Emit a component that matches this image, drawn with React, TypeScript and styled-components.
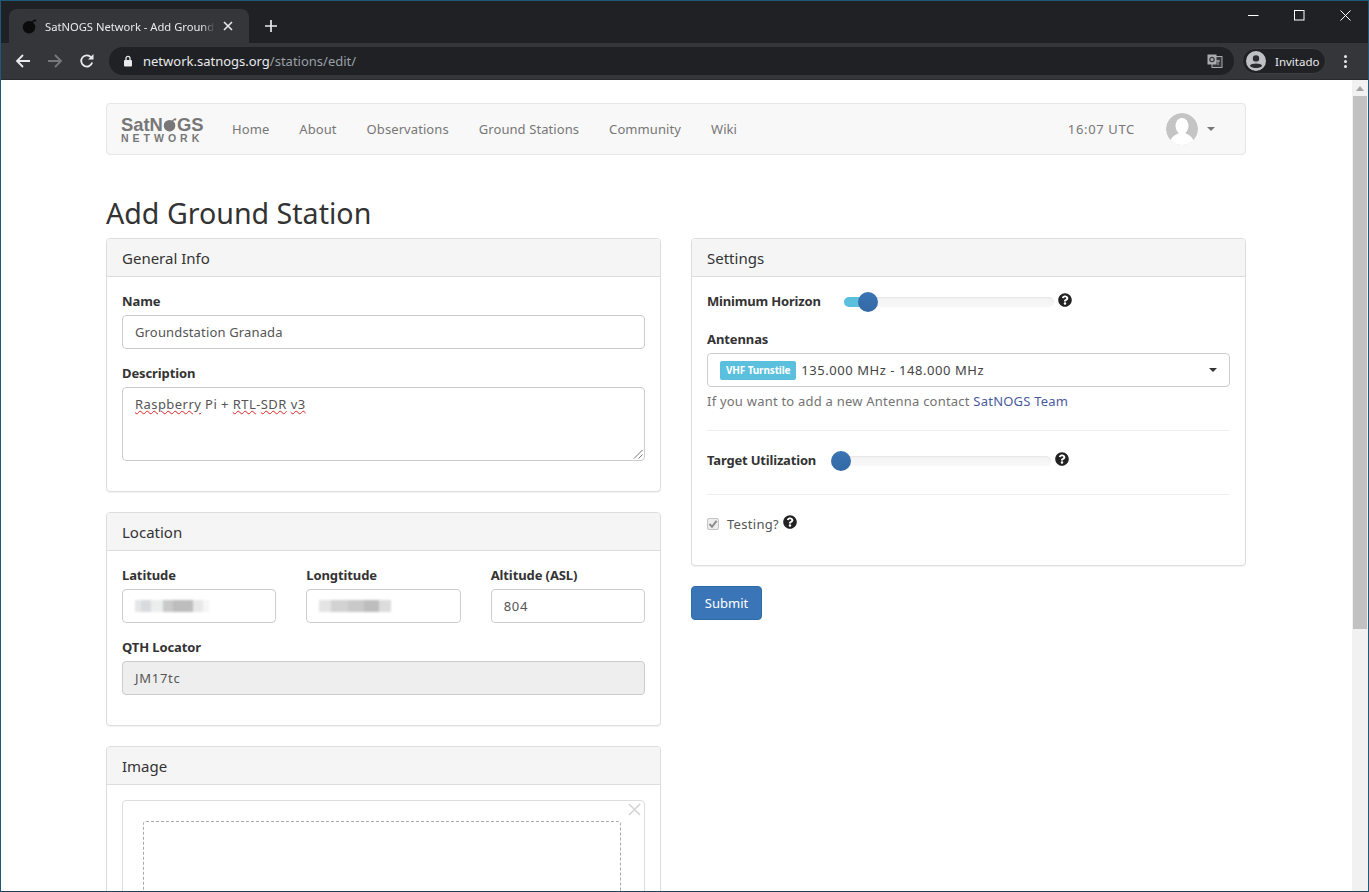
import React from "react";
import styled, { createGlobalStyle } from "styled-components";
import { FaQuestionCircle } from "react-icons/fa";

const GlobalStyle = createGlobalStyle`
  html, body {
    margin: 0;
    height: 100%;
    overflow: hidden;
    background: #fff;
  }
  * { box-sizing: border-box; }
`;

const Planet = ({ size, color }: { size: number; color: string }) => (
  <PlanetSvg width={size} height={size} viewBox="0 0 16 16">
    <circle cx="7.5" cy="8.8" r="6.6" fill={color} />
    <path d="M9 4.5 L13.6 1.2" stroke={color} strokeWidth="1.4" />
    <circle cx="14" cy="1.6" r="1.2" fill={color} />
  </PlanetSvg>
);

const HelpIcon = () => (
  <HelpWrap>
    <FaQuestionCircle size={14} />
  </HelpWrap>
);

const LEFT_MASK = "#e6e6e6 0 8%, #d8dadc 8% 22%, #eceeee 22% 38%, #c9c9c9 38% 52%, #bdbdbd 52% 78%, #e8e8e8 78% 92%, #f6f6f6 92%";
const RIGHT_MASK = "#e4e4e4 0 16%, #d2d2d2 16% 40%, #c9c9c9 40% 62%, #bdbdbd 62% 84%, #dcdcdc 84% 100%";

export default function App() {
  return (
    <Window>
      <GlobalStyle />
      <TabStrip>
        <Tab>
          <Planet size={15} color="#0b0b0b" />
          <TabTitle>SatNOGS Network - Add Ground Station</TabTitle>
          <svg width="10" height="10" viewBox="0 0 10 10">
            <path d="M1 1 L9 9 M9 1 L1 9" stroke="#e8eaed" strokeWidth="1.6" />
          </svg>
        </Tab>
        <NewTab>
          <svg width="12" height="12" viewBox="0 0 12 12">
            <path d="M6 0 V12 M0 6 H12" stroke="#e8eaed" strokeWidth="1.7" />
          </svg>
        </NewTab>
        <WindowControls>
          <svg width="11" height="11" viewBox="0 0 11 11">
            <path d="M0 5.5 H10.5" stroke="#fff" strokeWidth="1" />
          </svg>
          <svg width="11" height="11" viewBox="0 0 11 11">
            <rect x="0.5" y="0.5" width="9.5" height="9.5" fill="none" stroke="#fff" strokeWidth="1" />
          </svg>
          <svg width="11" height="11" viewBox="0 0 11 11">
            <path d="M0.5 0.5 L10.5 10.5 M10.5 0.5 L0.5 10.5" stroke="#fff" strokeWidth="1" />
          </svg>
        </WindowControls>
      </TabStrip>
      <Toolbar>
        <ToolButtons>
          <svg width="16" height="16" viewBox="0 0 16 16">
            <path d="M15 8 H2 M8 2 L2 8 L8 14" fill="none" stroke="#e8eaed" strokeWidth="1.8" />
          </svg>
          <svg width="16" height="16" viewBox="0 0 16 16">
            <path d="M1 8 H14 M8 2 L14 8 L8 14" fill="none" stroke="#77787b" strokeWidth="1.8" />
          </svg>
          <svg width="16" height="16" viewBox="0 0 16 16">
            <path d="M13.2 9.5 A5.6 5.6 0 1 1 12 4.2" fill="none" stroke="#e8eaed" strokeWidth="1.8" />
            <path d="M14.5 1 V6.6 H9 Z" fill="#e8eaed" />
          </svg>
        </ToolButtons>
        <Omnibox>
          <svg width="10" height="12" viewBox="0 0 10 12">
            <rect x="1" y="5" width="8" height="6.5" rx="1" fill="#e8eaed" />
            <path d="M3 5 V3.4 A2 2 0 0 1 7 3.4 V5" fill="none" stroke="#e8eaed" strokeWidth="1.3" />
          </svg>
          <UrlText>
            network.satnogs.org<UrlPath>/stations/edit/</UrlPath>
          </UrlText>
          <svg width="16" height="14" viewBox="0 0 16 14">
            <rect x="5" y="2.5" width="10" height="11" fill="#35363a" stroke="#a9abad" />
            <rect x="0.5" y="0.5" width="9" height="10" fill="#a9abad" />
            <circle cx="5" cy="5.5" r="2.2" fill="none" stroke="#35363a" strokeWidth="1.2" />
            <path d="M9 7 H13 M11 6 V11" stroke="#a9abad" strokeWidth="1" />
          </svg>
        </Omnibox>
        <ProfileChip>
          <svg width="20" height="20" viewBox="0 0 20 20">
            <circle cx="10" cy="10" r="10" fill="#bdc1c6" />
            <circle cx="10" cy="7.4" r="3.2" fill="#2b2c2f" />
            <path d="M3.8 15 C5 11.8 15 11.8 16.2 15 C14.6 16.6 12.4 17 10 17 C7.6 17 5.4 16.6 3.8 15 Z" fill="#2b2c2f" />
          </svg>
          <span>Invitado</span>
        </ProfileChip>
        <MenuDots>
          <i />
          <i />
          <i />
        </MenuDots>
      </Toolbar>
      <Viewport>
        <Page>
          <Navbar>
            <Logo>
              <LogoTop>
                SatN
                <Planet size={14} color="#777" />
                GS
              </LogoTop>
              <LogoBottom>NETWORK</LogoBottom>
            </Logo>
            <NavLinks>
              <NavLink>Home</NavLink>
              <NavLink>About</NavLink>
              <NavLink>Observations</NavLink>
              <NavLink>Ground Stations</NavLink>
              <NavLink>Community</NavLink>
              <NavLink>Wiki</NavLink>
            </NavLinks>
            <Clock>16:07 UTC</Clock>
            <Avatar>
              <svg width="32" height="32" viewBox="0 0 32 32">
                <circle cx="16" cy="16" r="16" fill="#c4c4c4" />
                <ellipse cx="16" cy="13" rx="6.5" ry="8" fill="#fff" />
                <path d="M4 29 C6 22 11 21.5 13 20 H19 C21 21.5 26 22 28 29 C24 33 8 33 4 29 Z" fill="#fff" />
              </svg>
            </Avatar>
            <Caret />
          </Navbar>
          <PageTitle>Add Ground Station</PageTitle>
          <Columns>
            <Column>
              <Panel>
                <PanelHeading>General Info</PanelHeading>
                <PanelBody>
                  <FormGroup>
                    <Label>Name</Label>
                    <Field $tracking={0.15}>Groundstation Granada</Field>
                  </FormGroup>
                  <FormGroup>
                    <Label>Description</Label>
                    <TextArea>
                      <Misspelled>Raspberry</Misspelled> Pi + <Misspelled>RTL</Misspelled>-<Misspelled>SDR</Misspelled>{" "}
                      <Misspelled>v3</Misspelled>
                      <ResizeGrip width="10" height="10" viewBox="0 0 10 10">
                        <path d="M9.5 1 L1 9.5 M9.5 5.5 L5.5 9.5" stroke="#777" strokeWidth="1" />
                      </ResizeGrip>
                    </TextArea>
                  </FormGroup>
                </PanelBody>
              </Panel>
              <Panel>
                <PanelHeading>Location</PanelHeading>
                <PanelBody>
                  <ThreeCols>
                    <FormGroup>
                      <Label>Latitude</Label>
                      <Field>
                        <Blurred $stops={LEFT_MASK} $width={74} />
                      </Field>
                    </FormGroup>
                    <FormGroup>
                      <Label>Longtitude</Label>
                      <Field>
                        <Blurred $stops={RIGHT_MASK} $width={72} />
                      </Field>
                    </FormGroup>
                    <FormGroup>
                      <Label>Altitude (ASL)</Label>
                      <Field $tracking={0.7}>804</Field>
                    </FormGroup>
                  </ThreeCols>
                  <FormGroup>
                    <Label>QTH Locator</Label>
                    <Field $disabled $tracking={0.7}>JM17tc</Field>
                  </FormGroup>
                </PanelBody>
              </Panel>
              <Panel>
                <PanelHeading>Image</PanelHeading>
                <PanelBody>
                  <DropZone>
                    <RemoveX width="13" height="13" viewBox="0 0 13 13">
                      <path d="M1 1 L12 12 M12 1 L1 12" stroke="#d4d4d4" strokeWidth="1.6" />
                    </RemoveX>
                    <DropInner />
                  </DropZone>
                </PanelBody>
              </Panel>
            </Column>
            <Column>
              <Panel>
                <PanelHeading>Settings</PanelHeading>
                <PanelBody>
                  <SliderRow>
                    <InlineLabel $width={137}>Minimum Horizon</InlineLabel>
                    <Slider $width={210}>
                      <SliderFill $width={24} />
                      <SliderThumb $left={14} />
                    </Slider>
                    <HelpIcon />
                  </SliderRow>
                  <AntennaGroup>
                    <Label>Antennas</Label>
                    <SelectBox>
                      <Badge>VHF Turnstile</Badge>
                      <SelectValue>135.000 MHz - 148.000 MHz</SelectValue>
                      <SelectCaret />
                    </SelectBox>
                    <HelpBlock>
                      If you want to add a new Antenna contact <TeamLink>SatNOGS Team</TeamLink>
                    </HelpBlock>
                  </AntennaGroup>
                  <Divider />
                  <SliderRow>
                    <InlineLabel $width={124}>Target Utilization</InlineLabel>
                    <Slider $width={220}>
                      <SliderThumb $left={0} />
                    </Slider>
                    <HelpIcon />
                  </SliderRow>
                  <LowerDivider />
                  <CheckRow>
                    <CheckBox>
                      <svg width="10" height="10" viewBox="0 0 10 10">
                        <path d="M1.5 5 L4 7.8 L8.6 1.8" fill="none" stroke="#8c8c8c" strokeWidth="2" />
                      </svg>
                    </CheckBox>
                    <span>Testing?</span>
                    <HelpIcon />
                  </CheckRow>
                </PanelBody>
              </Panel>
              <SubmitButton>Submit</SubmitButton>
            </Column>
          </Columns>
        </Page>
        <Scrollbar>
          <ScrollArrow />
          <ScrollThumb />
        </Scrollbar>
      </Viewport>
    </Window>
  );
}

const PlanetSvg = styled.svg`
  flex: none;
`;

const Window = styled.div`
  width: 1369px;
  height: 892px;
  border: 1px solid #1d5a78;
  border-bottom-color: #17445a;
  display: flex;
  flex-direction: column;
  overflow: hidden;
  font-family: "Noto Sans", "Liberation Sans", sans-serif;
  font-size: 13px;
  color: #333;
  background: #fff;
`;

const TabStrip = styled.div`
  height: 42px;
  flex: none;
  background: #202124;
  display: flex;
  align-items: flex-end;
  padding-left: 8px;
  position: relative;
`;

const Tab = styled.div`
  width: 240px;
  height: 34px;
  background: #35363a;
  border-radius: 8px 8px 0 0;
  display: flex;
  align-items: center;
  gap: 8px;
  padding: 0 16px 0 13px;
  color: #e8eaed;
  font-size: 11.2px;
`;

const TabTitle = styled.span`
  flex: 1;
  min-width: 0;
  white-space: nowrap;
  overflow: hidden;
  mask-image: linear-gradient(90deg, #000 92%, transparent);
`;

const NewTab = styled.div`
  width: 44px;
  height: 34px;
  display: flex;
  align-items: center;
  justify-content: center;
`;

const WindowControls = styled.div`
  position: absolute;
  top: 9px;
  right: 17px;
  display: flex;
  gap: 35px;
`;

const Toolbar = styled.div`
  height: 37px;
  flex: none;
  background: #35363a;
  display: flex;
  align-items: center;
  border-bottom: 1px solid #2a2b2e;
  padding: 0 14px;
`;

const ToolButtons = styled.div`
  display: flex;
  align-items: center;
  gap: 16px;
  margin-right: 14px;
`;

const Omnibox = styled.div`
  width: 1125px;
  height: 28px;
  background: #202124;
  border-radius: 14px;
  display: flex;
  align-items: center;
  padding: 0 11px 0 14px;
`;

const UrlText = styled.div`
  flex: 1;
  margin-left: 10px;
  color: #e8eaed;
  font-size: 13px;
`;

const UrlPath = styled.span`
  color: #9aa0a6;
`;

const ProfileChip = styled.div`
  margin-left: 8px;
  width: 84px;
  height: 26px;
  border-radius: 13px;
  background: #202124;
  border: 1px solid #3c3d41;
  display: flex;
  align-items: center;
  gap: 9px;
  padding-left: 3px;
  color: #e8eaed;
  font-size: 11.5px;
`;

const MenuDots = styled.div`
  margin-left: 18px;
  display: flex;
  flex-direction: column;
  gap: 2px;

  i {
    display: block;
    width: 3px;
    height: 3px;
    border-radius: 50%;
    background: #e8eaed;
  }
`;

const Viewport = styled.div`
  flex: 1;
  min-height: 0;
  display: flex;
`;

const Page = styled.div`
  flex: 1;
  min-width: 0;
  overflow: hidden;
  padding: 23px 106px 0 105px;
`;

const Scrollbar = styled.div`
  width: 16px;
  flex: none;
  background: #f1f1f1;
  display: flex;
  flex-direction: column;
  align-items: center;
`;

const ScrollArrow = styled.div`
  margin: 6px 0 5px;
  border: 4px solid transparent;
  border-top: 0;
  border-bottom: 5px solid #a3a3a3;
  width: 0;
  height: 0;
`;

const ScrollThumb = styled.div`
  width: 14px;
  height: 533px;
  background: #c1c1c1;
`;

const Navbar = styled.nav`
  height: 52px;
  background: #f8f8f8;
  border: 1px solid #e7e7e7;
  border-radius: 4px;
  display: flex;
  align-items: center;
  padding: 0 30px 0 14px;
`;

const Logo = styled.div`
  width: 82px;
  flex: none;
  color: #777;
  font-family: "Liberation Sans", Arial, sans-serif;
  font-weight: 700;
`;

const LogoTop = styled.div`
  display: flex;
  align-items: center;
  font-size: 18.4px;
  line-height: 18px;
  height: 18px;
  letter-spacing: 0;
`;

const LogoBottom = styled.div`
  font-size: 10.5px;
  line-height: 9px;
  height: 9px;
  letter-spacing: 4px;
  white-space: nowrap;
`;

const NavLinks = styled.div`
  display: flex;
  gap: 30px;
  margin-left: 29px;
  flex: 1;
`;

const NavLink = styled.span`
  color: #777;
  font-size: 13px;
  letter-spacing: 0.08px;
`;

const Clock = styled.span`
  color: #777;
  font-size: 13px;
  letter-spacing: 0.65px;
  margin-right: 31px;
`;

const Avatar = styled.div`
  width: 32px;
  height: 32px;
  border-radius: 50%;
  overflow: hidden;
  margin-right: 9px;
`;

const Caret = styled.span`
  border: 4px solid transparent;
  border-top: 4px solid #777;
  border-bottom: 0;
  width: 0;
  height: 0;
`;

const PageTitle = styled.h1`
  margin: 38px 0 6px;
  height: 39px;
  font-size: 28.6px;
  line-height: 39px;
  font-weight: 400;
  color: #333;
`;

const Columns = styled.div`
  display: grid;
  grid-template-columns: 1fr 1fr;
  gap: 30px;
  align-items: start;
`;

const Column = styled.div`
  min-width: 0;
`;

const Panel = styled.section`
  background: #fff;
  border: 1px solid #ddd;
  border-radius: 4px;
  margin-bottom: 20px;
  box-shadow: 0 1px 1px rgba(0, 0, 0, 0.05);
`;

const PanelHeading = styled.div`
  height: 38px;
  padding: 0 15px;
  background: #f5f5f5;
  border-bottom: 1px solid #ddd;
  border-radius: 3px 3px 0 0;
  font-size: 15px;
  line-height: 38px;
  color: #333;
`;

const PanelBody = styled.div`
  padding: 15px;
`;

const FormGroup = styled.div`
  margin-bottom: 15px;
`;

const AntennaGroup = styled.div`
  margin-top: 18px;
`;

const Label = styled.label`
  display: block;
  height: 18px;
  line-height: 19px;
  margin-bottom: 5px;
  font-weight: 700;
  font-size: 13px;
  letter-spacing: -0.1px;
`;

const Field = styled.div<{ $disabled?: boolean; $tracking?: number }>`
  height: 34px;
  padding: 0 12px;
  display: flex;
  align-items: center;
  border: 1px solid #ccc;
  border-radius: 4px;
  background: ${(p) => (p.$disabled ? "#eee" : "#fff")};
  color: #555;
  font-size: 13px;
  letter-spacing: ${(p) => p.$tracking ?? 0}px;
`;

const TextArea = styled.div`
  height: 74px;
  padding: 6px 12px;
  border: 1px solid #ccc;
  border-radius: 4px;
  color: #555;
  font-size: 13px;
  line-height: 20px;
  letter-spacing: 0.44px;
  position: relative;
`;

const ResizeGrip = styled.svg`
  position: absolute;
  right: 1px;
  bottom: 1px;
`;

const Misspelled = styled.span`
  text-decoration: underline wavy #e02020 1px;
  text-underline-offset: 1px;
`;

const ThreeCols = styled.div`
  display: grid;
  grid-template-columns: repeat(3, 1fr);
  gap: 30px;
`;

const Blurred = styled.div<{ $stops: string; $width: number }>`
  width: ${(p) => p.$width}px;
  height: 12px;
  background: linear-gradient(90deg, ${(p) => p.$stops});
  filter: blur(1px);
`;

const DropZone = styled.div`
  height: 300px;
  border: 1px solid #ddd;
  border-radius: 4px;
  padding: 20px 23px 20px 20px;
  position: relative;
`;

const DropInner = styled.div`
  height: 260px;
  border: 1px dashed #aaa;
  border-radius: 3px;
`;

const RemoveX = styled.svg`
  position: absolute;
  top: 2px;
  right: 3px;
`;

const SliderRow = styled.div`
  display: flex;
  align-items: center;
  height: 20px;
`;

const InlineLabel = styled.label<{ $width: number }>`
  width: ${(p) => p.$width}px;
  flex: none;
  font-weight: 700;
  font-size: 13px;
  letter-spacing: -0.18px;
  position: relative;
  top: -1px;
`;

const Slider = styled.div<{ $width: number }>`
  width: ${(p) => p.$width}px;
  height: 10px;
  border-radius: 5px;
  background: linear-gradient(#f3f3f3, #f8f8f8);
  box-shadow: inset 0 1px 2px rgba(0, 0, 0, 0.06);
  position: relative;
`;

const SliderFill = styled.div<{ $width: number }>`
  width: ${(p) => p.$width}px;
  height: 10px;
  border-radius: 5px 0 0 5px;
  background: #5bc0de;
`;

const SliderThumb = styled.div<{ $left: number }>`
  position: absolute;
  top: -5px;
  left: ${(p) => p.$left}px;
  width: 20px;
  height: 20px;
  border-radius: 50%;
  background: linear-gradient(#3b74b4, #3269a5);
`;

const HelpWrap = styled.span`
  display: inline-flex;
  color: #222;
  margin-left: 4px;
  position: relative;
  top: -2px;
`;

const SelectBox = styled.div`
  height: 34px;
  padding: 0 12px;
  border: 1px solid #ccc;
  border-radius: 4px;
  display: flex;
  align-items: center;
  color: #444;
  font-size: 13px;
`;

const Badge = styled.span`
  height: 19px;
  line-height: 19px;
  padding: 0 6px;
  background: #5bc0de;
  border-radius: 2px;
  color: #fff;
  font-size: 10px;
  font-weight: 700;
  letter-spacing: -0.15px;
  white-space: nowrap;
`;

const SelectValue = styled.span`
  flex: 1;
  margin-left: 5px;
  letter-spacing: 0.55px;
`;

const SelectCaret = styled.span`
  border: 4px solid transparent;
  border-top: 4px solid #333;
  border-bottom: 0;
  width: 0;
  height: 0;
`;

const HelpBlock = styled.p`
  margin: 5px 0 0;
  line-height: 19px;
  color: #737373;
  font-size: 13px;
  letter-spacing: 0.22px;
`;

const TeamLink = styled.span`
  color: #4a5b9c;
`;

const Divider = styled.hr`
  margin: 19px 0 20px;
  border: 0;
  border-top: 1px solid #eee;
`;

const LowerDivider = styled(Divider)`
  margin: 23px 0 19px;
`;

const CheckRow = styled.div`
  display: flex;
  align-items: center;
  height: 20px;
  color: #555;
  font-size: 13px;
  letter-spacing: 0.3px;
  margin-bottom: 16px;
`;

const CheckBox = styled.span`
  width: 12px;
  height: 12px;
  margin-right: 8px;
  border: 1px solid #c4c4c4;
  border-radius: 2px;
  background: #ededed;
  display: inline-flex;
  align-items: center;
  justify-content: center;
`;

const SubmitButton = styled.button`
  width: 71px;
  height: 34px;
  background: #3a76b7;
  border: 1px solid #2e6da4;
  border-radius: 4px;
  color: #fff;
  font-family: inherit;
  font-size: 13px;
  display: block;
  padding: 0;
`;
